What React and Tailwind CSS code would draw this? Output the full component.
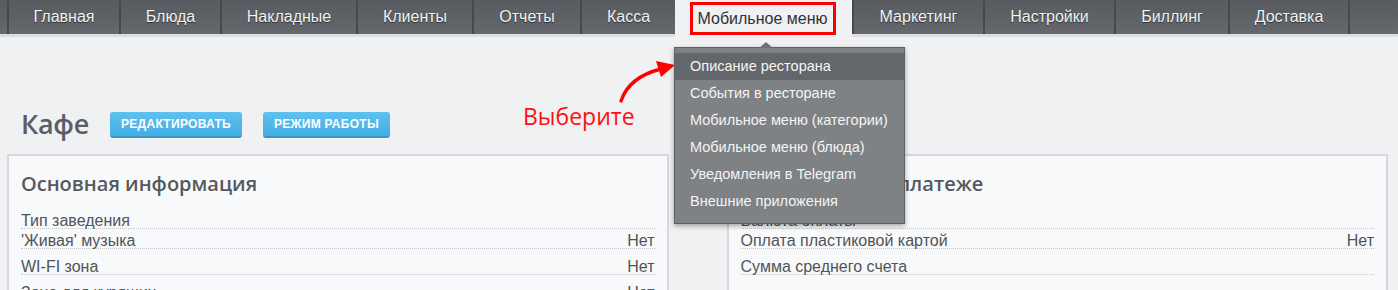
import React from "react";

const TABS = [
  { name: "Главная", w: 112 },
  { name: "Блюда", w: 101 },
  { name: "Накладные", w: 136 },
  { name: "Клиенты", w: 116 },
  { name: "Отчеты", w: 108 },
  { name: "Касса", w: 95 },
  { name: "Мобильное меню", w: 177, active: true },
  { name: "Маркетинг", w: 131 },
  { name: "Настройки", w: 131 },
  { name: "Биллинг", w: 114 },
  { name: "Доставка", w: 122 },
];

const MENU = [
  "Описание ресторана",
  "События в ресторане",
  "Мобильное меню (категории)",
  "Мобильное меню (блюда)",
  "Уведомления в Telegram",
  "Внешние приложения",
];

const MAIN_INFO = [
  { label: "Тип заведения", value: "", h: "h-[20px]" },
  { label: "'Живая' музыка", value: "Нет", h: "h-[20px]" },
  { label: "WI-FI зона", value: "Нет", h: "h-[26px]" },
  { label: "Зона для курящих", value: "Нет", h: "h-[26px]" },
];

const PAY_INFO = [
  { label: "Валюта оплаты", value: "", h: "h-[20px]" },
  { label: "Оплата пластиковой картой", value: "Нет", h: "h-[20px]" },
  { label: "Сумма среднего счета", value: "", h: "h-[26px]" },
];

function Row({ label, value, h }) {
  return (
    <div className={`flex items-end justify-between border-b border-dotted border-[#c4c6c9] ${h}`}>
      <span className="leading-[15px]">{label}</span>
      <span className="leading-[15px]">{value}</span>
    </div>
  );
}

function Card({ title, rows }) {
  return (
    <div className="bg-[#f8f9fa] border-2 border-[#d6d8db] border-b-0 px-[12px] pt-[15px] h-[140px] overflow-hidden">
      <h3 className="text-[20px] leading-[26px] font-semibold text-[#55595e] mb-[12px] [font-family:'Open_Sans','Liberation_Sans',sans-serif]">
        {title}
      </h3>
      <div className="text-[16px] text-[#505459]">
        {rows.map((r) => (
          <Row key={r.label} {...r} />
        ))}
      </div>
    </div>
  );
}

export default function App() {
  return (
    <div className="relative w-[1398px] h-[290px] overflow-hidden bg-[#f0f1f3] [font-family:'Liberation_Sans',Arial,sans-serif]">
      {/* top nav */}
      <div className="flex h-[37px] pl-[7px] bg-gradient-to-b from-[#575b5f] to-[#65696d] border-b-[3px] border-[#dcdee0]">
        {TABS.map((t) =>
          t.active ? (
            <div
              key={t.name}
              style={{ width: t.w }}
              className="flex items-start justify-center pt-[2px] pr-[2px] bg-[#f0f1f3] -mb-[3px] h-[40px]"
            >
              <span className="border-[3px] border-[#ff0000] h-[33px] px-[5px] leading-[27px] text-[16px] text-[#2f3236]">
                {t.name}
              </span>
            </div>
          ) : (
            <div
              key={t.name}
              style={{ width: t.w }}
              className={`flex items-center justify-center border-l-2 border-[#46494c] text-[16px] text-[#f2f2f2] [text-shadow:0_1px_1px_rgba(0,0,0,0.55)] ${
                t.name === "Доставка" ? "border-r-2" : ""
              }`}
            >
              {t.name}
            </div>
          )
        )}
      </div>

      {/* title row */}
      <div className="flex items-center pl-[21px] pt-[62px] h-[113px]">
        <h1 className="text-[27px] font-semibold tracking-[-0.3px] text-[#5a5e63] mr-[21px] [font-family:'Open_Sans','Liberation_Sans',sans-serif]">
          Кафе
        </h1>
        <button className="h-[26px] px-[11px] rounded-[3px] bg-gradient-to-b from-[#5ec2f0] to-[#43ade3] border-b-2 border-[#3a96c9] text-white text-[12px] font-bold tracking-[0.3px] mr-[21px]">
          РЕДАКТИРОВАТЬ
        </button>
        <button className="h-[26px] px-[11px] rounded-[3px] bg-gradient-to-b from-[#5ec2f0] to-[#43ade3] border-b-2 border-[#3a96c9] text-white text-[12px] font-bold tracking-[0.3px]">
          РЕЖИМ РАБОТЫ
        </button>
      </div>

      {/* cards */}
      <div className="grid grid-cols-2 gap-[58px] pl-[7px] pr-[10px] pt-[4px]">
        <Card title="Основная информация" rows={MAIN_INFO} />
        <Card title="Информация о платеже" rows={PAY_INFO} />
      </div>

      {/* annotation */}
      <div className="absolute left-[523px] top-[101px] text-[23px] leading-[30px] text-[#ff1010] [font-family:'Open_Sans','Liberation_Sans',sans-serif]">
        Выберите
      </div>
      <svg className="absolute left-0 top-0 pointer-events-none" width="1398" height="290">
        <path d="M621 101 Q629 77 661 69" stroke="#ff0000" strokeWidth="3.4" fill="none" strokeLinecap="round" />
        <path d="M675 65 L656 61 L661 77 Z" fill="#ff0000" />
      </svg>

      {/* dropdown */}
      <div className="absolute left-[674px] top-[47px] w-[231px] bg-[#7f8285] border border-[#5e6164] shadow-[0_2px_5px_rgba(0,0,0,0.35)] pt-[5px] pb-[8px]">
        <div className="absolute -top-[6px] left-[84px] w-0 h-0 border-l-[7px] border-r-[7px] border-b-[6px] border-l-transparent border-r-transparent border-b-[#6f7275]" />
        {MENU.map((m, i) => (
          <div
            key={m}
            className={`h-[27px] leading-[27px] pl-[15px] text-[14.5px] text-[#f4f4f4] ${
              i === 0 ? "bg-[#63676b]" : ""
            }`}
          >
            {m}
          </div>
        ))}
      </div>
    </div>
  );
}
